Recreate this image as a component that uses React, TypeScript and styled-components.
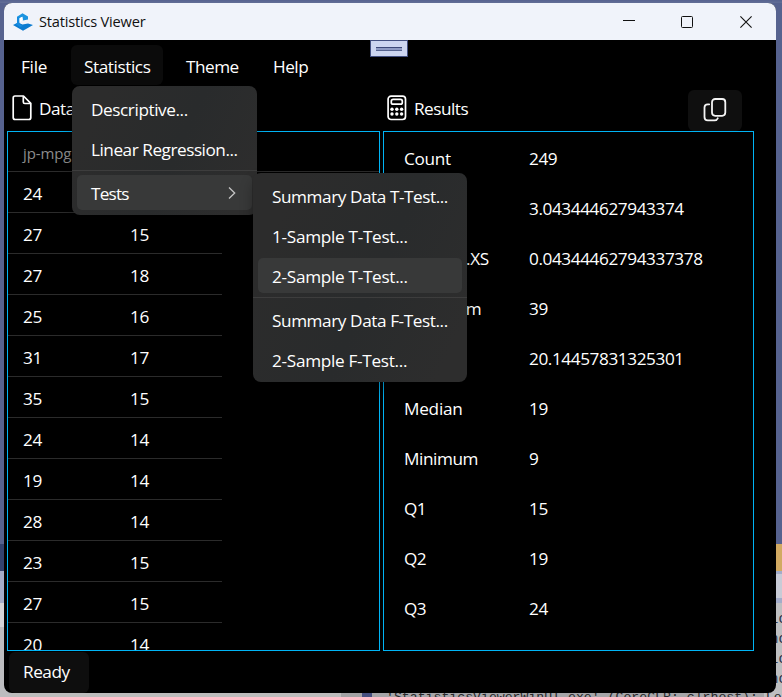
import React from "react";
import styled, { createGlobalStyle } from "styled-components";

const GlobalStyle = createGlobalStyle`
  * { box-sizing: border-box; }
  html, body { margin: 0; padding: 0; overflow: hidden; }
  body { font-family: "Open Sans", "Noto Sans", sans-serif; font-size: 17.2px; color: #fff; }
  svg { display: block; flex: none; }
`;

const Desktop = styled.div`
  position: relative;
  width: 782px;
  height: 697px;
  padding: 3px 6px 4px 4px;
  overflow: hidden;
  background:
    linear-gradient(#56628f, #626e96) 0 0 / 100% 3px no-repeat,
    linear-gradient(#56628f 0 544px, #33426f 544px 571px, #a3acc9 571px 603px, #d4d4d8 603px 627px, #bcbcbf 627px) 0 0 / 12px 100% no-repeat,
    linear-gradient(#56628f 0 544px, #d2aa62 544px 571px, #a3acc9 571px 574px, #c8cbd6 574px 598px, #a3acc9 598px 603px, #bebfc1 603px) 100% 0 / 18px 100% no-repeat,
    linear-gradient(90deg, #bcbcbc 341px, #a2a2a4 341px 362px, #465080 362px 372px, #a5a5a8 372px);
`;

const CodeEdge = styled.div`
  position: absolute;
  left: 770px;
  top: 609px;
  font: 14px/20px "Liberation Mono", monospace;
  color: #29324a;
  white-space: pre;
`;

const OutputLine = styled.div`
  position: absolute;
  left: 386px;
  top: 688px;
  font: 13.2px/20px "Liberation Mono", monospace;
  color: #29292c;
  white-space: pre;
`;

const Window = styled.div`
  position: relative;
  display: flex;
  flex-direction: column;
  width: 772px;
  height: 690px;
  border-radius: 8px;
  overflow: hidden;
  background: #000;
`;

const TitleBar = styled.header`
  display: flex;
  align-items: center;
  height: 37px;
  flex: none;
  padding-left: 9px;
  background: #f0f3fa;
  color: #111;
`;

const Caption = styled.span`
  margin-left: 6px;
  padding-bottom: 2px;
  font-size: 14.6px;
  letter-spacing: -0.2px;
`;

const WindowButtons = styled.div`
  display: flex;
  margin-left: auto;
  margin-right: 1px;
`;

const WindowButton = styled.div`
  display: flex;
  width: 58.5px;
  height: 37px;
  align-items: center;
  justify-content: center;
`;

const DebugTab = styled.div`
  position: absolute;
  left: 366px;
  top: 37px;
  width: 38px;
  height: 17px;
  padding: 6px 5px 0;
  border: 1px solid #424f80;
  background: #ccd5f0;
`;

const DebugGrip = styled.div`
  height: 4px;
  border-top: 1px solid #3c4878;
  border-bottom: 1px solid #56638f;
  background: #8f9bc4;
`;

const MenuBar = styled.nav`
  display: flex;
  height: 50px;
  padding: 5px 0 5px 4px;
  flex: none;
`;

const MenuBarItem = styled.div<{ $width: number; $after?: number; $open?: boolean; $ls: number }>`
  width: ${(p) => p.$width}px;
  height: 40px;
  margin-right: ${(p) => p.$after ?? 0}px;
  padding-left: 13px;
  line-height: 43px;
  border-radius: 6px;
  letter-spacing: ${(p) => p.$ls}px;
  background: ${(p) => (p.$open ? "#0b0b0b" : "transparent")};
`;

const Panels = styled.main`
  display: grid;
  grid-template-columns: 373px 371px;
  column-gap: 3px;
  padding-left: 3px;
  flex: none;
`;

const Panel = styled.section`
  display: flex;
  flex-direction: column;
`;

const PanelHead = styled.div<{ $inset: number }>`
  display: flex;
  align-items: center;
  height: 41px;
  padding-left: ${(p) => p.$inset}px;
  padding-right: 12px;
`;

const PanelTitle = styled.span`
  margin-top: -4px;
  margin-left: 7px;
  letter-spacing: -0.5px;
`;

const PanelIcon = styled.div`
  margin-top: -6px;
`;

const CopyButton = styled.div`
  display: flex;
  align-items: center;
  justify-content: center;
  width: 54px;
  height: 41px;
  margin-left: auto;
  padding-bottom: 2px;
  border-radius: 6px;
  background: #0f0f0f;
`;

const PanelBody = styled.div`
  height: 520px;
  border: 1px solid #00b4f5;
  overflow: hidden;
`;

const TableHead = styled.div`
  height: 40px;
  padding-left: 15px;
  border-bottom: 1px solid #2b2b2b;
  color: #8c8c8c;
  font-size: 15px;
  letter-spacing: -0.1px;
  line-height: 42px;
`;

const DataRow = styled.div`
  display: grid;
  grid-template-columns: 107px 92px;
  width: 214px;
  height: 41px;
  padding-left: 15px;
  border-bottom: 1px solid #2b2b2b;
  line-height: 43px;
  letter-spacing: -0.4px;
`;

const ResultRow = styled.div`
  display: grid;
  grid-template-columns: 125px 1fr;
  height: 50px;
  padding-left: 20px;
  line-height: 54px;
`;

const Cell = styled.span<{ $ls?: number }>`
  letter-spacing: ${(p) => p.$ls ?? -0.41}px;
  white-space: nowrap;
`;

const StatusBar = styled.footer`
  display: flex;
  padding: 1px 0 0 5px;
`;

const StatusItem = styled.div`
  width: 80px;
  height: 41px;
  padding-left: 14px;
  border-radius: 6px;
  background: #0e0e0e;
  line-height: 40px;
  letter-spacing: -0.45px;
`;

const Flyout = styled.div<{ $x: number; $y: number; $w: number }>`
  position: absolute;
  display: flex;
  flex-direction: column;
  left: ${(p) => p.$x}px;
  top: ${(p) => p.$y}px;
  width: ${(p) => p.$w}px;
  padding: 3px 0 2px;
  border-radius: 8px;
  background: linear-gradient(115deg, #2c2c2c 15%, #292b2c 55%, #2d2d2d 90%);
  box-shadow: 0 8px 14px rgba(0, 0, 0, 0.3);
`;

const FlyoutItem = styled.div<{ $hover?: boolean; $ls: number }>`
  display: flex;
  align-items: center;
  justify-content: space-between;
  height: 35px;
  margin: 2px 5px 3px;
  padding: 2px 16px 0 14px;
  border-radius: 5px;
  background: ${(p) => (p.$hover ? "#383939" : "transparent")};
  line-height: 34px;
  letter-spacing: ${(p) => p.$ls}px;
  white-space: nowrap;

  svg {
    margin-top: -2px;
  }
`;

const Divider = styled.div`
  height: 1px;
  margin: 1px 0 2px;
  background: #3d3d3d;
`;

const AppLogo = () => (
  <svg width="20" height="20" viewBox="0 0 20 20">
    <path d="M0 13 L5 10.5 L9.5 12.6 L15 11.4 L20 13 L10 18.8 Z" fill="#0b7bd0" />
    <path d="M4 4.8 L9.5 1.2 L15 4.5 V7.5 L9.8 8.6 L9.4 4.8 L6.2 6.5 L6.2 12 L4 10.8 Z" fill="#1c94e0" />
    <path d="M6 6.5 L9.2 4.8 L9.8 8 L6.4 10.5 Z" fill="#fff" />
    <path d="M4 4.8 L6.3 6 L6.3 12 L10 14 L7 15 L3 12.4 L4.2 10.5 Z" fill="#168be0" />
  </svg>
);

const DocumentIcon = () => (
  <svg width="20" height="26" viewBox="0 0 20 26" fill="none" stroke="#fff" strokeWidth="1.7" strokeLinejoin="round">
    <path d="M3 1 H11.5 L18.8 8.3 V22.5 Q18.8 24.5 16.8 24.5 H3.2 Q1.2 24.5 1.2 22.5 V3 Q1.2 1 3 1 Z" />
    <path d="M11.3 1.2 V7 Q11.3 8.5 12.8 8.5 H18.6" />
  </svg>
);

const CalculatorIcon = () => (
  <svg width="20" height="26" viewBox="0 0 20 26" fill="none" stroke="#fff" strokeWidth="1.7">
    <rect x="1.1" y="1.1" width="17.4" height="23.4" rx="3" />
    <rect x="4.3" y="4.4" width="11" height="4.8" rx="1.8" />
    <g fill="#fff" stroke="none">
      {[14.3, 19].map((y) => [5, 9.8, 14.6].map((x) => <circle key={`${x}-${y}`} cx={x} cy={y} r="1.7" />))}
    </g>
  </svg>
);

const CopyIcon = () => (
  <svg width="24" height="24" viewBox="0 0 24 24" fill="none" stroke="#f4f4f4" strokeWidth="1.8" strokeLinecap="round">
    <rect x="9" y="1" width="13.3" height="16.8" rx="3.2" />
    <path d="M6.2 6.3 H4.7 Q1.5 6.3 1.5 9.5 V19 Q1.5 22.4 4.8 22.4 H11.5 Q14 22.4 14.8 20.3" />
  </svg>
);

const dataRows = [
  [24, 18], [27, 15], [27, 18], [25, 16], [31, 17], [35, 15],
  [24, 14], [19, 14], [28, 14], [23, 15], [27, 15], [20, 14],
];

const results: [string, string, number][] = [
  ["Count", "249", -0.3],
  ["Kurtosis", "3.043444627943374", -0.85],
  ["Kurtosis.XS", "0.04344462794337378", -0.4],
  ["Maximum", "39", -0.5],
  ["Mean", "20.14457831325301", -0.3],
  ["Median", "19", -0.25],
  ["Minimum", "9", -0.42],
  ["Q1", "15", -0.5],
  ["Q2", "19", -0.5],
  ["Q3", "24", -0.5],
];

export default function App() {
  return (
    <Desktop>
      <GlobalStyle />
      <CodeEdge>{"Lc\nnc\nLc\nnc"}</CodeEdge>
      <OutputLine>{"'StatisticsViewerWinUI.exe' (CoreCLR: clrhost): Lo"}</OutputLine>
      <Window>
        <TitleBar>
          <AppLogo />
          <Caption>Statistics Viewer</Caption>
          <WindowButtons>
            <WindowButton>
              <svg width="12" height="12"><path d="M0 4.5 H12" stroke="#111" /></svg>
            </WindowButton>
            <WindowButton>
              <svg width="12" height="12"><rect x=".5" y=".5" width="11" height="11" rx="1" fill="none" stroke="#111" /></svg>
            </WindowButton>
            <WindowButton>
              <svg width="12" height="12"><path d="M.4 .4 L11.6 11.6 M11.6 .4 L.4 11.6" stroke="#111" strokeWidth="1.1" /></svg>
            </WindowButton>
          </WindowButtons>
        </TitleBar>

        <MenuBar>
          <MenuBarItem $width={63} $ls={-0.25}>File</MenuBarItem>
          <MenuBarItem $width={92} $after={10} $ls={-0.42} $open>Statistics</MenuBarItem>
          <MenuBarItem $width={87} $ls={-0.5}>Theme</MenuBarItem>
          <MenuBarItem $width={70} $ls={-0.5}>Help</MenuBarItem>
        </MenuBar>

        <Panels>
          <Panel>
            <PanelHead $inset={5}>
              <PanelIcon><DocumentIcon /></PanelIcon>
              <PanelTitle>Data</PanelTitle>
            </PanelHead>
            <PanelBody>
              <TableHead>jp-mpg</TableHead>
              {dataRows.map(([a, b], i) => (
                <DataRow key={i}><span>{a}</span><span>{b}</span></DataRow>
              ))}
            </PanelBody>
          </Panel>
          <Panel>
            <PanelHead $inset={4}>
              <PanelIcon><CalculatorIcon /></PanelIcon>
              <PanelTitle>Results</PanelTitle>
              <CopyButton><CopyIcon /></CopyButton>
            </PanelHead>
            <PanelBody>
              {results.map(([label, value, ls]) => (
                <ResultRow key={label}><Cell $ls={ls}>{label}</Cell><Cell>{value}</Cell></ResultRow>
              ))}
            </PanelBody>
          </Panel>
        </Panels>

        <StatusBar><StatusItem>Ready</StatusItem></StatusBar>
        <DebugTab><DebugGrip /></DebugTab>
      </Window>

      <Flyout $x={72} $y={86} $w={185}>
        <FlyoutItem $ls={-0.42}>Descriptive...</FlyoutItem>
        <FlyoutItem $ls={-0.47}>Linear Regression...</FlyoutItem>
        <Divider />
        <FlyoutItem $ls={-0.8} $hover>
          Tests
          <svg width="8" height="14" fill="none" stroke="#c4c4c4" strokeWidth="1.3"><path d="M1 1.5 L6.7 7 L1 12.5" /></svg>
        </FlyoutItem>
      </Flyout>
      <Flyout $x={253} $y={173} $w={214}>
        <FlyoutItem $ls={-0.44}>Summary Data T-Test...</FlyoutItem>
        <FlyoutItem $ls={-0.3}>1-Sample T-Test...</FlyoutItem>
        <FlyoutItem $ls={-0.3} $hover>2-Sample T-Test...</FlyoutItem>
        <Divider />
        <FlyoutItem $ls={-0.42}>Summary Data F-Test...</FlyoutItem>
        <FlyoutItem $ls={-0.3}>2-Sample F-Test...</FlyoutItem>
      </Flyout>
    </Desktop>
  );
}
